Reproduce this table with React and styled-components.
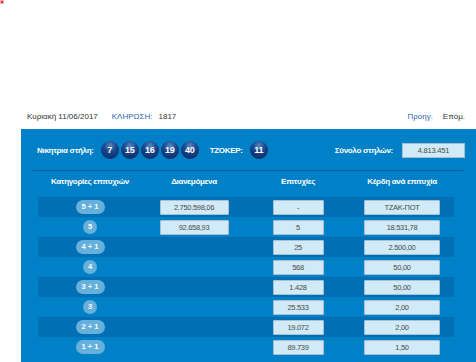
import React from "react";
import styled, { createGlobalStyle } from "styled-components";

const Global = createGlobalStyle`
  html, body { margin: 0; padding: 0; background: #fff; }
  body {
    font-family: "Liberation Sans", Arial, sans-serif;
    font-size: 8px;
    color: #333;
  }
`;

const Page = styled.div`
  width: 476px;
  height: 362px;
  overflow: hidden;
`;

const Dot = styled.div`
  width: 2px;
  height: 2px;
  margin: 1px 0 0 1px;
  background: #e8262a;
  box-shadow: 0 0 0 1px rgba(232, 38, 42, 0.35);
`;

const TopBar = styled.div`
  display: flex;
  align-items: center;
  height: 12px;
  margin-top: 108px;
  padding: 0 11px 0 27px;
  line-height: 12px;
  font-size: 8px;
`;

const Info = styled.span`
  color: ${(p) => (p.$blue ? "#2b66ad" : "#333")};
  margin-left: ${(p) => p.$ml || 0}px;
`;

const Spacer = styled.div`
  flex: 1;
`;

const Panel = styled.div`
  margin: 6px 0 0 21px;
  background: #0080c6;
  padding: 13px 0 5px;
  height: 233px;
  box-sizing: border-box;
`;

const DrawRow = styled.div`
  display: flex;
  align-items: center;
  height: 16px;
  padding: 0 11px 0 16px;
`;

const Label = styled.span`
  color: #fff;
  font-weight: bold;
  font-size: 8px;
  letter-spacing: -0.3px;
  white-space: nowrap;
  margin-left: ${(p) => p.$ml || 0}px;
  margin-right: ${(p) => p.$mr || 0}px;
`;

const Balls = styled.div`
  display: flex;
  gap: 2px;
`;

const Ball = styled.div`
  width: 18px;
  height: 18px;
  border-radius: 50%;
  display: flex;
  align-items: center;
  justify-content: center;
  background: radial-gradient(circle at 50% 26%, #5a86c2 0%, #1c4b92 36%, #0e3574 68%, #0a295d 100%);
  color: #fff;
  font-weight: bold;
  font-size: 9px;
  letter-spacing: -0.3px;
`;

const TotalBox = styled.div`
  width: 63px;
  height: 15px;
  box-sizing: border-box;
  border: 1px solid #a7c0d1;
  background: #d1eaf8;
  color: #4a4a44;
  text-align: center;
  line-height: 13px;
  font-size: 7.5px;
  letter-spacing: -0.2px;
`;

const Divider = styled.div`
  height: 1px;
  margin: 12px 13px 0 12px;
  background: #0b5f99;
`;

const Grid = styled.div`
  display: grid;
  grid-template-columns: repeat(4, 104px);
  margin-left: 17px;
  width: 416px;
`;

const HeadCell = styled.div`
  color: #fff;
  font-weight: bold;
  font-size: 8px;
  letter-spacing: -0.3px;
  text-align: center;
  line-height: 12px;
  padding: 5px 0 9px;
`;

const Row = styled.div`
  display: contents;
`;

const Cell = styled.div`
  height: 20px;
  display: flex;
  align-items: center;
  justify-content: center;
  background: ${(p) => (p.$dark ? "#006fb3" : "transparent")};
`;

const Pill = styled.div`
  height: 14px;
  width: ${(p) => (p.$wide ? 29 : 14)}px;
  box-sizing: border-box;
  border-radius: 7px;
  background: #66b0dc;
  color: #fff;
  font-weight: bold;
  font-size: 7.5px;
  line-height: 14px;
  text-align: center;
`;

const ValueBox = styled.div`
  width: ${(p) => p.$w}px;
  height: 15px;
  box-sizing: border-box;
  border: 1px solid #a7c0d1;
  border-radius: 1px;
  background: #d1eaf8;
  color: #4a4a44;
  text-align: center;
  line-height: 13px;
  font-size: 7.5px;
  letter-spacing: -0.3px;
`;

const rows = [
  ["5 + 1", "2.750.598,06", "-", "ΤΖΑΚ-ΠΟΤ"],
  ["5", "92.658,93", "5", "18.531,78"],
  ["4 + 1", null, "25", "2.500,00"],
  ["4", null, "568", "50,00"],
  ["3 + 1", null, "1.428", "50,00"],
  ["3", null, "25.533", "2,00"],
  ["2 + 1", null, "19.072", "2,00"],
  ["1 + 1", null, "89.739", "1,50"],
];

export default function App() {
  return (
    <Page>
      <Global />
      <Dot />
      <TopBar>
        <Info>Κυριακή 11/06/2017</Info>
        <Info $blue $ml={14}>ΚΛΗΡΩΣΗ:</Info>
        <Info $ml={6}>1817</Info>
        <Spacer />
        <Info $blue>Προηγ.</Info>
        <Info $ml={10}>Επόμ.</Info>
      </TopBar>
      <Panel>
        <DrawRow>
          <Label $mr={7}>Νικητρια στήλη:</Label>
          <Balls>
            {[7, 15, 16, 19, 40].map((n) => (
              <Ball key={n}>{n}</Ball>
            ))}
          </Balls>
          <Label $ml={11} $mr={7}>ΤΖΟΚΕΡ:</Label>
          <Ball>11</Ball>
          <Spacer />
          <Label $mr={9}>Σύνολο στηλών:</Label>
          <TotalBox>4.813.451</TotalBox>
        </DrawRow>
        <Divider />
        <Grid>
          <HeadCell>Κατηγορίες επιτυχιών</HeadCell>
          <HeadCell>Διανεμόμενα</HeadCell>
          <HeadCell>Επιτυχίες</HeadCell>
          <HeadCell>Κέρδη ανά επιτυχία</HeadCell>
          {rows.map((r, i) => {
            const dark = i % 2 === 0;
            return (
              <Row key={i}>
                <Cell $dark={dark}>
                  <Pill $wide={r[0].length > 1}>{r[0]}</Pill>
                </Cell>
                <Cell $dark={dark}>
                  {r[1] && <ValueBox $w={69}>{r[1]}</ValueBox>}
                </Cell>
                <Cell $dark={dark}>
                  <ValueBox $w={51}>{r[2]}</ValueBox>
                </Cell>
                <Cell $dark={dark}>
                  <ValueBox $w={76}>{r[3]}</ValueBox>
                </Cell>
              </Row>
            );
          })}
        </Grid>
      </Panel>
    </Page>
  );
}
